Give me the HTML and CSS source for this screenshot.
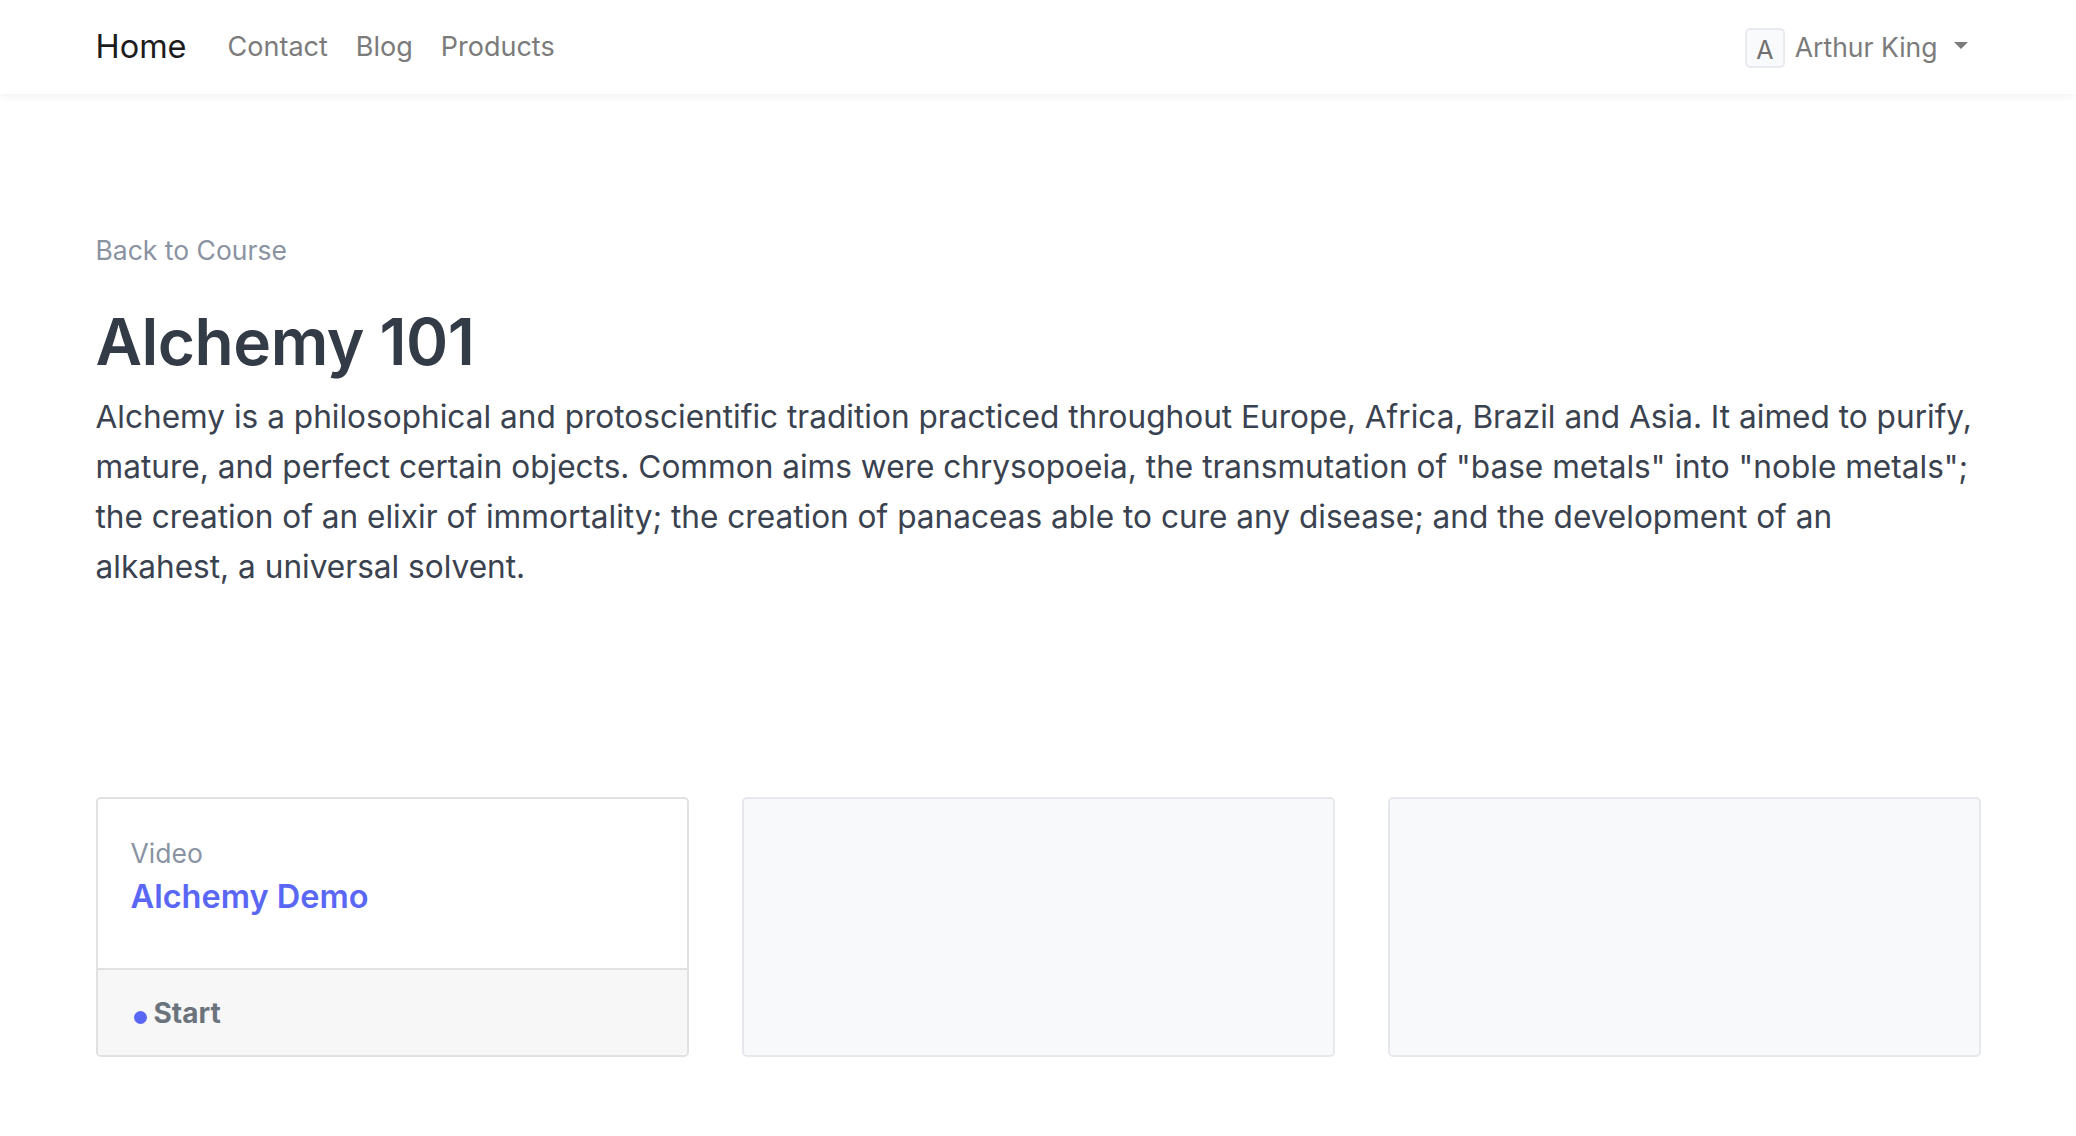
FILE: index.html
```html
<!DOCTYPE html>
<html lang="en">
<head>
<meta charset="utf-8">
<title>Alchemy 101</title>
<link rel="stylesheet" href="styles.css">
</head>
<body>
<header class="navbar">
  <div class="container nav-inner">
    <a class="brand" href="#">Home</a>
    <nav class="nav-links">
      <a href="#">Contact</a>
      <a href="#">Blog</a>
      <a href="#">Products</a>
    </nav>
    <div class="user">
      <span class="avatar">A</span>
      <span class="user-name">Arthur King</span>
      <span class="caret"></span>
    </div>
  </div>
</header>
<main class="container main">
  <a class="back" href="#">Back to Course</a>
  <h1 class="title">Alchemy 101</h1>
  <p class="lead">Alchemy is a philosophical and protoscientific tradition practiced throughout Europe, Africa, Brazil and Asia. It aimed to purify, mature, and perfect certain objects. Common aims were chrysopoeia, the transmutation of "base metals" into "noble metals"; the creation of an elixir of immortality; the creation of panaceas able to cure any disease; and the development of an alkahest, a universal solvent.</p>
  <section class="cards">
    <div class="card">
      <div class="card-body">
        <div class="card-kind">Video</div>
        <a class="card-title" href="#">Alchemy Demo</a>
      </div>
      <div class="card-footer">
        <span class="dot"></span><span class="start">Start</span>
      </div>
    </div>
    <div class="card card-empty"></div>
    <div class="card card-empty"></div>
  </section>
</main>
</body>
</html>
```

FILE: styles.css
```css
* { box-sizing: border-box; }
html, body { margin: 0; padding: 0; }
body {
  font-family: Inter, "Noto Sans", "Liberation Sans", sans-serif;
  background: #fff;
  color: #353d49;
}
a { text-decoration: none; }
.container {
  width: 1885px;
  margin: 0 auto;
}
.navbar {
  height: 94px;
  background: #fff;
  box-shadow: 0 2px 8px rgba(0,0,0,0.06);
  position: relative;
}
.nav-inner {
  display: flex;
  align-items: center;
  height: 94px;
}
.brand {
  font-size: 32.5px;
  color: #1c1c1c;
  margin-right: 41px;
  line-height: 40px;
}
.nav-links {
  display: flex;
  gap: 28px;
}
.nav-links a {
  font-size: 27px;
  color: #7b7b7b;
  line-height: 40px;
}
.user {
  margin-left: auto;
  margin-right: 13px;
  display: flex;
  align-items: center;
}
.avatar {
  width: 40px;
  height: 40px;
  border: 2px solid #e8eaef;
  border-radius: 5px;
  background: #f9fafc;
  color: #6f6f6f;
  font-size: 25px;
  display: flex;
  align-items: center;
  justify-content: center;
  padding-top: 4px;
  margin-right: 10px;
  margin-top: 2px;
}
.user-name {
  font-size: 26.5px;
  color: #7b7b7b;
  line-height: 40px;
}
.caret {
  width: 0;
  height: 0;
  border-left: 7.5px solid transparent;
  border-right: 7.5px solid transparent;
  border-top: 7.5px solid #7b7b7b;
  margin-left: 16px;
  margin-top: -4px;
}
.main {
  padding-top: 136px;
  padding-bottom: 80px;
}
.back {
  display: block;
  font-size: 26.5px;
  line-height: 40px;
  color: #8a93a2;
}
.title {
  margin: 34px 0 0;
  font-size: 64px;
  line-height: 76px;
  font-weight: 600;
  color: #333b46;
  letter-spacing: -0.5px;
}
.lead {
  margin: 12px 0 0;
  max-width: 1877px;
  font-size: 31.6px;
  line-height: 50px;
  color: #3a4250;
}
.cards {
  margin-top: 205px;
  display: grid;
  grid-template-columns: repeat(3, 1fr);
  gap: 53px;
}
.card {
  height: 260px;
  border: 2px solid #e1e1e1;
  border-radius: 5px;
  background: #fff;
  display: flex;
  flex-direction: column;
  overflow: hidden;
}
.card-empty {
  background: #f8f9fb;
  border-color: #e6e8ec;
}
.card-body {
  flex: 1;
  padding: 36px 33px 0;
}
.card-kind {
  font-size: 26.5px;
  line-height: 36px;
  color: #8a93a2;
}
.card-title {
  display: block;
  margin-top: 6px;
  font-size: 32.5px;
  line-height: 40px;
  font-weight: 600;
  color: #5a67f5;
}
.card-footer {
  height: 87px;
  border-top: 2px solid #e1e1e1;
  background: #f7f7f7;
  display: flex;
  align-items: center;
  padding-left: 36px;
}
.dot {
  width: 13px;
  height: 13px;
  border-radius: 50%;
  background: #5a67f5;
  margin-right: 7px;
  margin-top: 9px;
}
.start {
  font-size: 28px;
  font-weight: 700;
  color: #6b737d;
}
```
